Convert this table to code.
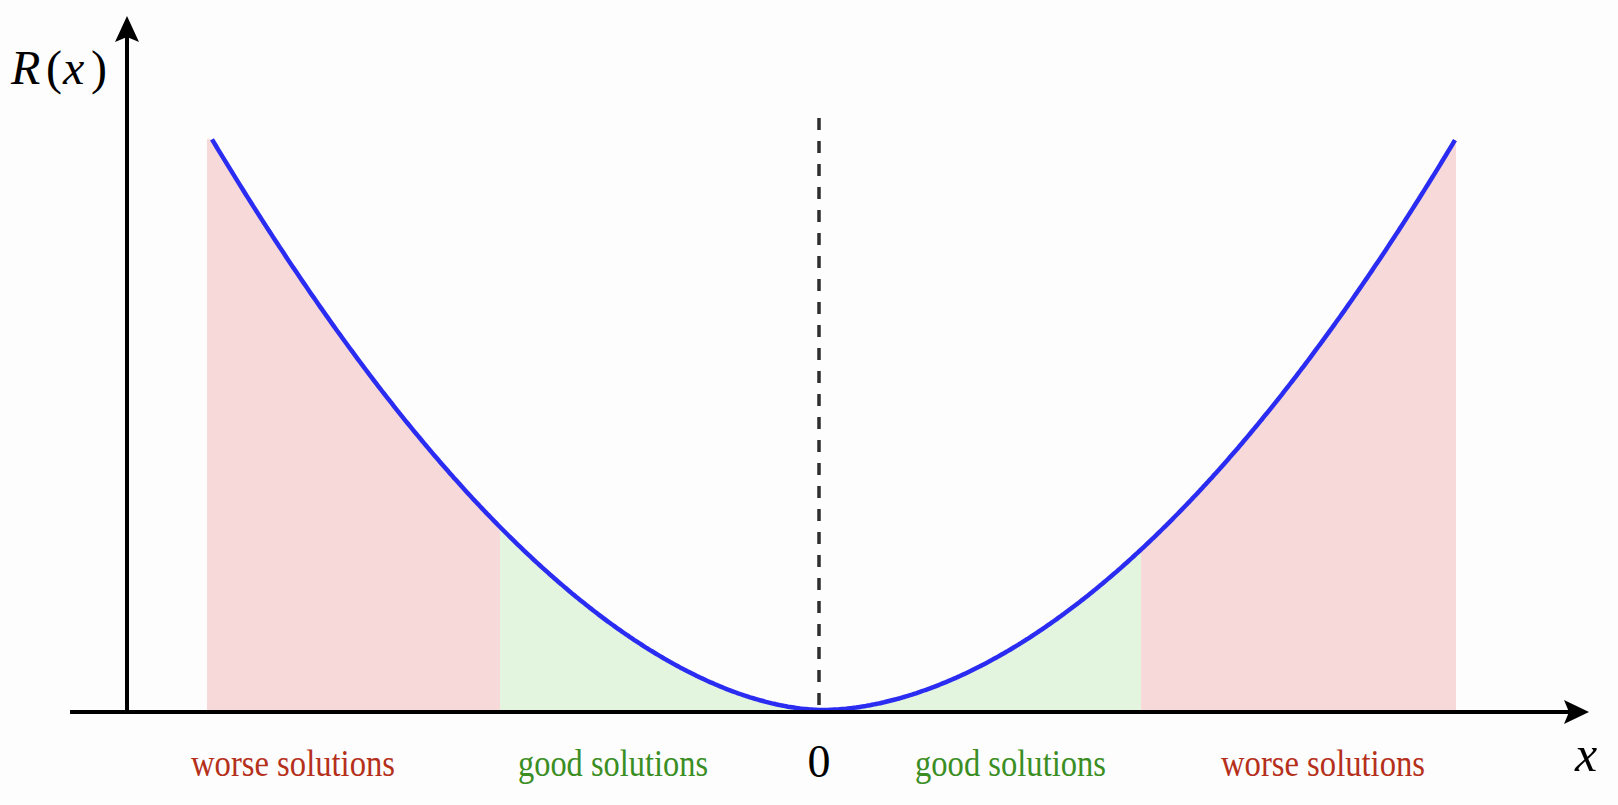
import React from 'react';

// vertex of the curve and the two arms (measured off the figure)
const VX = 822;
const VY = 710;
const leftY = (x: number) => VY - 0.006288 * Math.pow(Math.max(VX - x, 0), 1.78);
const rightY = (x: number) => VY - 0.003743 * Math.pow(Math.max(x - VX, 0), 1.85);
const curveY = (x: number) => (x < VX ? leftY(Math.max(x, 212)) : rightY(Math.min(x, 1455)));

const pts = (from: number, to: number, step = 2) => {
  const out: string[] = [];
  for (let x = from; x <= to; x += step) out.push(`${x},${curveY(x).toFixed(1)}`);
  out.push(`${to},${curveY(to).toFixed(1)}`);
  return out;
};

const area = (from: number, to: number) =>
  `M${from},${VY} L${pts(from, to).join(' L')} L${to},${VY} Z`;

const curve = `M${pts(212, 1455).join(' L')}`;

const Label: React.FC<{ x: number; w: number; red?: boolean; children: string }> = ({ x, w, red, children }) => (
  <text
    x={x}
    y={776}
    fontSize={38}
    textLength={w}
    lengthAdjust="spacingAndGlyphs"
    className={red ? 'fill-[#b5301b]' : 'fill-[#3a8e23]'}
  >
    {children}
  </text>
);

const App: React.FC = () => {
  return (
    <div className="w-[1618px] h-[805px] bg-[#fdfdfd] overflow-hidden">
      <svg
        width={1618}
        height={805}
        viewBox="0 0 1618 805"
        className="block font-['Liberation_Serif','DejaVu_Serif','Times_New_Roman',serif]"
      >
        {/* shaded regions */}
        <path d={area(207, 500)} fill="#f6d9d8" />
        <path d={area(500, VX)} fill="#e3f5de" />
        <path d={area(VX, 1141)} fill="#e3f5de" />
        <path d={area(1141, 1456)} fill="#f6d9d8" />

        {/* optimum marker */}
        <line x1={819} y1={118} x2={819} y2={710} stroke="#2e2e2e" strokeWidth={3.5} strokeDasharray="12 11" />

        {/* R(x) */}
        <path d={curve} fill="none" stroke="#2b2cf2" strokeWidth={4.5} strokeLinejoin="round" />

        {/* axes */}
        <line x1={70} y1={712} x2={1572} y2={712} stroke="#000" strokeWidth={4} />
        <path d="M1589,712 L1564,700 L1569,712 L1564,724 Z" fill="#000" />
        <line x1={127} y1={34} x2={127} y2={714} stroke="#000" strokeWidth={4} />
        <path d="M127,16 L115,42 L127,37 L139,42 Z" fill="#000" />

        <text y={84} fontSize={48} fill="#000">
          <tspan x={11} fontStyle="italic">R</tspan>
          <tspan x={46}>(</tspan>
          <tspan x={63} fontStyle="italic">x</tspan>
          <tspan x={91}>)</tspan>
        </text>
        <text x={1575} y={771} fontSize={50} fontStyle="italic" fill="#000">
          x
        </text>
        <text x={819} y={777} fontSize={46} textAnchor="middle" fill="#000">
          0
        </text>

        <Label x={191} w={204} red>worse solutions</Label>
        <Label x={518} w={190}>good solutions</Label>
        <Label x={915} w={191}>good solutions</Label>
        <Label x={1221} w={204} red>worse solutions</Label>
      </svg>
    </div>
  );
};

export default App;
